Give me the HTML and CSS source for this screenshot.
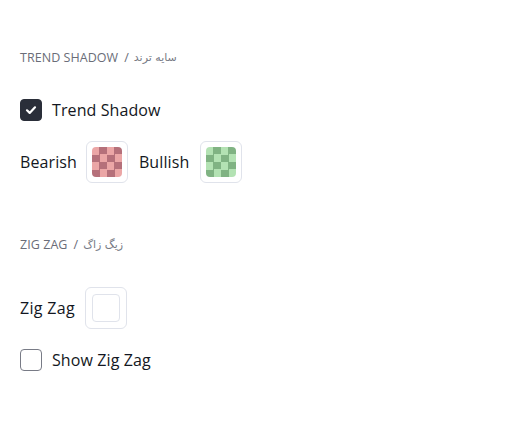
FILE: index.html
```html
<!DOCTYPE html>
<html>
<head>
<meta charset="utf-8">
<link rel="stylesheet" href="styles.css">
</head>
<body>
<div class="panel">
  <div class="title">TREND SHADOW<span class="sep">/</span><span class="fa" dir="rtl">سایه ترند</span></div>
  <label class="check-row first">
    <span class="box checked"><svg width="14" height="14" viewBox="0 0 14 14"><path d="M3 7.3l2.7 2.6L11 4.3" fill="none" stroke="#fff" stroke-width="2.2" stroke-linecap="round" stroke-linejoin="round"/></svg></span>
    <span class="label">Trend Shadow</span>
  </label>
  <div class="swatch-row">
    <span class="label">Bearish</span>
    <span class="swatch"><span class="chk bear"></span></span>
    <span class="label bull-label">Bullish</span>
    <span class="swatch"><span class="chk bull"></span></span>
  </div>
  <div class="title second">ZIG ZAG<span class="sep">/</span><span class="fa" dir="rtl">زیگ زاگ</span></div>
  <div class="swatch-row zz">
    <span class="label">Zig Zag</span>
    <span class="swatch"><span class="empty"></span></span>
  </div>
  <label class="check-row">
    <span class="box"></span>
    <span class="label">Show Zig Zag</span>
  </label>
</div>
</body>
</html>
```
FILE: styles.css
```css
html, body { margin: 0; padding: 0; background: #fff; }
body { font-family: "Open Sans", "Noto Sans", "DejaVu Sans", sans-serif; color: #131722; }
.panel { padding: 50px 20px 0 20px; display: flex; flex-direction: column; align-items: flex-start; }
.title { font-size: 12.5px; line-height: 16px; height: 16px; color: #6a6d78; letter-spacing: 0.05px; display: flex; align-items: center; }
.title .sep { margin: 0 5px 0 6px; }
.title .fa { font-family: "DejaVu Sans", sans-serif; font-size: 11px; letter-spacing: 0; color: #787b86; }
.title.second { margin-top: 54px; }
.check-row { display: flex; align-items: center; gap: 10px; height: 22px; margin-top: 20px; }
.check-row.first { margin-top: 33px; }
.box { width: 20px; height: 20px; border: 1px solid #787b86; border-radius: 4px; display: flex; align-items: center; justify-content: center; background: #fff; }
.box.checked { background: #2a2e39; border-color: #2a2e39; }
.label { font-size: 16px; line-height: 22px; color: #131722; letter-spacing: 0.1px; }
.swatch-row { display: flex; align-items: center; height: 42px; margin-top: 20px; }
.swatch-row.zz { margin-top: 34px; }
.swatch-row .label { margin-right: 9px; }
.swatch-row .swatch + .label { margin-left: 11px; }
.swatch-row .bull-label { margin-right: 11px; }
.swatch-row.zz .label { margin-right: 10px; letter-spacing: 0.3px; }
.swatch { width: 40px; height: 40px; border: 1px solid #e0e3eb; border-radius: 6px; display: flex; align-items: center; justify-content: center; box-sizing: content-box; }
.chk { width: 30px; height: 30px; border-radius: 4px; background-size: 15px 15px; }
.chk.bear { background-image: repeating-conic-gradient(#b5707a 0 25%, #eba6a6 0 50%); }
.chk.bull { background-image: repeating-conic-gradient(#80b383 0 25%, #b3e2b3 0 50%); }
.empty { width: 26px; height: 26px; border: 1px solid #e0e3eb; border-radius: 4px; }
```
